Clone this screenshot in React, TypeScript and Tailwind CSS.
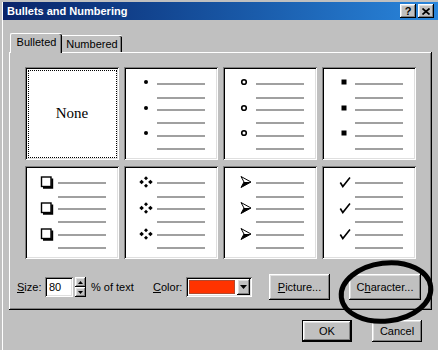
import React from "react";

const RAISED =
  "shadow-[inset_-1px_-1px_0_#000,inset_1px_1px_0_#fff,inset_-2px_-2px_0_#808080,inset_2px_2px_0_#dfdfdf]";
const SUNKEN =
  "shadow-[inset_1px_1px_0_#808080,inset_-1px_-1px_0_#fff,inset_2px_2px_0_#000,inset_-2px_-2px_0_#dfdfdf]";

type Kind = "dot" | "circle" | "square" | "box" | "diamonds" | "arrow" | "check";

function Bullet({ kind, y }: { kind: Kind; y: number }) {
  switch (kind) {
    case "dot":
      return <circle cx={22} cy={y} r={2} fill="#000" />;
    case "circle":
      return <circle cx={21} cy={y} r={2.3} fill="none" stroke="#000" strokeWidth={1.6} />;
    case "square":
      return <rect x={19.5} y={y - 2.5} width={5} height={5} fill="#000" />;
    case "box":
      return (
        <g>
          <rect x={16.5} y={y - 5} width={9.5} height={9.5} fill="#fff" stroke="#000" strokeWidth={1.4} />
          <polyline points={`${27.2},${y - 3.5} ${27.2},${y + 5.7} ${18},${y + 5.7}`} fill="none" stroke="#000" strokeWidth={2} />
        </g>
      );
    case "diamonds": {
      const d = (cx: number, cy: number, r: number) =>
        `${cx},${cy - r} ${cx + r},${cy} ${cx},${cy + r} ${cx - r},${cy}`;
      return (
        <g fill="#000">
          <polygon points={d(22, y - 3.8, 2)} />
          <polygon points={d(22, y + 3.8, 2)} />
          <polygon points={d(17.6, y, 2.3)} />
          <polygon points={d(26.4, y, 2.3)} />
        </g>
      );
    }
    case "arrow":
      return (
        <g>
          <polygon
            points={`${18},${y - 5.5} ${28},${y} ${18},${y + 5.5} ${21},${y}`}
            fill="#fff"
            stroke="#000"
            strokeWidth={1}
            strokeLinejoin="miter"
          />
          <polygon points={`${21},${y} ${28},${y} ${18},${y + 5.5}`} fill="#000" />
        </g>
      );
    case "check":
      return (
        <path
          d={`M18.3 ${y + 0.5} L20.8 ${y + 4.5} L28 ${y - 4.5}`}
          fill="none"
          stroke="#000"
          strokeWidth={1.6}
          strokeLinejoin="miter"
        />
      );
  }
}

function BulletCell({ kind, ys }: { kind: Kind; ys: number[] }) {
  const lines = [16, 30, 42, 55, 68, 81];
  return (
    <div className={`w-[94px] h-[93px] bg-white ${SUNKEN}`}>
      <svg width="94" height="93" viewBox="0 0 94 93">
        {lines.map((t) => (
          <rect key={t} x={33} y={t} width={48} height={2} fill="#a0a0a0" />
        ))}
        {ys.map((y) => (
          <Bullet key={y} kind={kind} y={y} />
        ))}
      </svg>
    </div>
  );
}

function Btn({
  children,
  className = "",
}: {
  children: React.ReactNode;
  className?: string;
}) {
  return (
    <div
      className={`bg-[#c0c0c0] ${RAISED} flex items-center justify-center text-[11px] text-black ${className}`}
    >
      {children}
    </div>
  );
}

export default function App() {
  const row1 = [15, 41, 66];
  const row2 = [16, 42, 68];
  return (
    <div className="relative w-[438px] h-[350px] overflow-hidden bg-[#c0c0c0] pt-[2px] pl-[2px] font-['Liberation_Sans',Arial,sans-serif] text-black">
      <div className="h-full border-l border-white flex flex-col">
        {/* Title bar */}
        <div className="h-[18px] bg-gradient-to-r from-[#0a246a] to-[#2a86dc] flex items-center pl-[4px] pr-[4px]">
          <span className="text-white font-bold text-[11px] leading-none">Bullets and Numbering</span>
          <div className="ml-auto flex gap-[2px]">
            <Btn className="w-[16px] h-[14px]">
              <span className="font-bold text-[11px] leading-none">?</span>
            </Btn>
            <Btn className="w-[16px] h-[14px]">
              <svg width="8" height="7" viewBox="0 0 8 7">
                <path d="M0.5 0.5 L7.5 6.5 M7.5 0.5 L0.5 6.5" stroke="#000" strokeWidth={1.7} />
              </svg>
            </Btn>
          </div>
        </div>

        {/* Tabs */}
        <div className="mt-[13px] ml-[7px] h-[20px] flex items-end relative z-10">
          <div className="w-[52px] h-[20px] bg-[#c0c0c0] border-l border-t border-white rounded-tl-[2px] rounded-tr-[2px] shadow-[inset_-1px_0_0_#000,inset_-2px_0_0_#808080] flex items-center justify-center pb-[3px] text-[11px]">
            Bulleted
          </div>
          <div className="w-[60px] h-[17px] mb-[1px] bg-[#c0c0c0] border-t border-white rounded-tr-[2px] shadow-[inset_-1px_0_0_#000,inset_-2px_0_0_#808080] flex items-center justify-center text-[11px]">
            Numbered
          </div>
        </div>

        {/* Panel */}
        <div className="-mt-[1px] ml-[6px] w-[423px] h-[258px] shadow-[inset_-1px_-1px_0_#000,inset_1px_1px_0_#fff,inset_-2px_-2px_0_#808080] pt-[15px] flex flex-col">
          <div className="ml-[16px] grid grid-cols-[repeat(4,94px)] gap-x-[5px] gap-y-[6px]">
            <div className={`w-[94px] h-[93px] bg-white ${SUNKEN} p-[2px] flex`}>
              <div className="flex-1 m-[0.5px] border border-dotted border-black flex items-center justify-center">
                <span className="font-['Liberation_Serif','Times_New_Roman',serif] text-[15px] leading-none">None</span>
              </div>
            </div>
            <BulletCell kind="dot" ys={row1} />
            <BulletCell kind="circle" ys={row1} />
            <BulletCell kind="square" ys={row1} />
            <BulletCell kind="box" ys={row2} />
            <BulletCell kind="diamonds" ys={row2} />
            <BulletCell kind="arrow" ys={row2} />
            <BulletCell kind="check" ys={row2} />
          </div>

          <div className="mt-[15px] ml-[8px] h-[26px] flex items-center text-[11px]">
            <div className="w-[28px]">
              <span className="underline">S</span>ize:
            </div>
            <div className={`w-[28px] h-[20px] bg-white ${SUNKEN} flex items-center pl-[4px]`}>80</div>
            <div className="ml-[2px] w-[11px] h-[20px] flex flex-col">
              <div className={`h-[10px] bg-[#c0c0c0] ${RAISED} flex items-center justify-center`}>
                <svg width="5" height="3" viewBox="0 0 5 3">
                  <path d="M2.5 0 L5 3 L0 3 Z" fill="#000" />
                </svg>
              </div>
              <div className={`h-[10px] bg-[#c0c0c0] ${RAISED} flex items-center justify-center`}>
                <svg width="5" height="3" viewBox="0 0 5 3">
                  <path d="M0 0 L5 0 L2.5 3 Z" fill="#000" />
                </svg>
              </div>
            </div>
            <div className="ml-[5px] w-[62px]">% of text</div>
            <div className="w-[33px]">
              <span className="underline">C</span>olor:
            </div>
            <div className={`w-[66px] h-[20px] bg-white ${SUNKEN} p-[2px] flex items-stretch`}>
              <div className="flex-1 m-[1px] mr-[2px] bg-[#ff3300] border border-[#b04a30]" />
              <div className={`w-[13px] bg-[#c0c0c0] ${RAISED} flex items-center justify-center`}>
                <svg width="7" height="4" viewBox="0 0 7 4">
                  <path d="M0 0 L7 0 L3.5 4 Z" fill="#000" />
                </svg>
              </div>
            </div>
            <Btn className="ml-[17px] w-[61px] h-[26px]">
              <span>
                <span className="underline">P</span>icture...
              </span>
            </Btn>
            <Btn className="ml-[19px] w-[72px] h-[26px]">
              <span>
                C<span className="underline">h</span>aracter...
              </span>
            </Btn>
          </div>
        </div>

        {/* OK / Cancel */}
        <div className="mt-[10px] pr-[16px] flex justify-end gap-[20px]">
          <div className="w-[50px] h-[22px] border border-black flex">
            <Btn className="flex-1">OK</Btn>
          </div>
          <Btn className="w-[50px] h-[22px]">Cancel</Btn>
        </div>
      </div>

      {/* Annotation ellipse */}
      <svg
        className="absolute left-0 top-0 pointer-events-none"
        width="438"
        height="350"
        viewBox="0 0 438 350"
      >
        <ellipse
          cx={386}
          cy={292}
          rx={45}
          ry={29}
          fill="none"
          stroke="#000"
          strokeWidth={5}
          transform="rotate(-7 386 292)"
        />
      </svg>
    </div>
  );
}
